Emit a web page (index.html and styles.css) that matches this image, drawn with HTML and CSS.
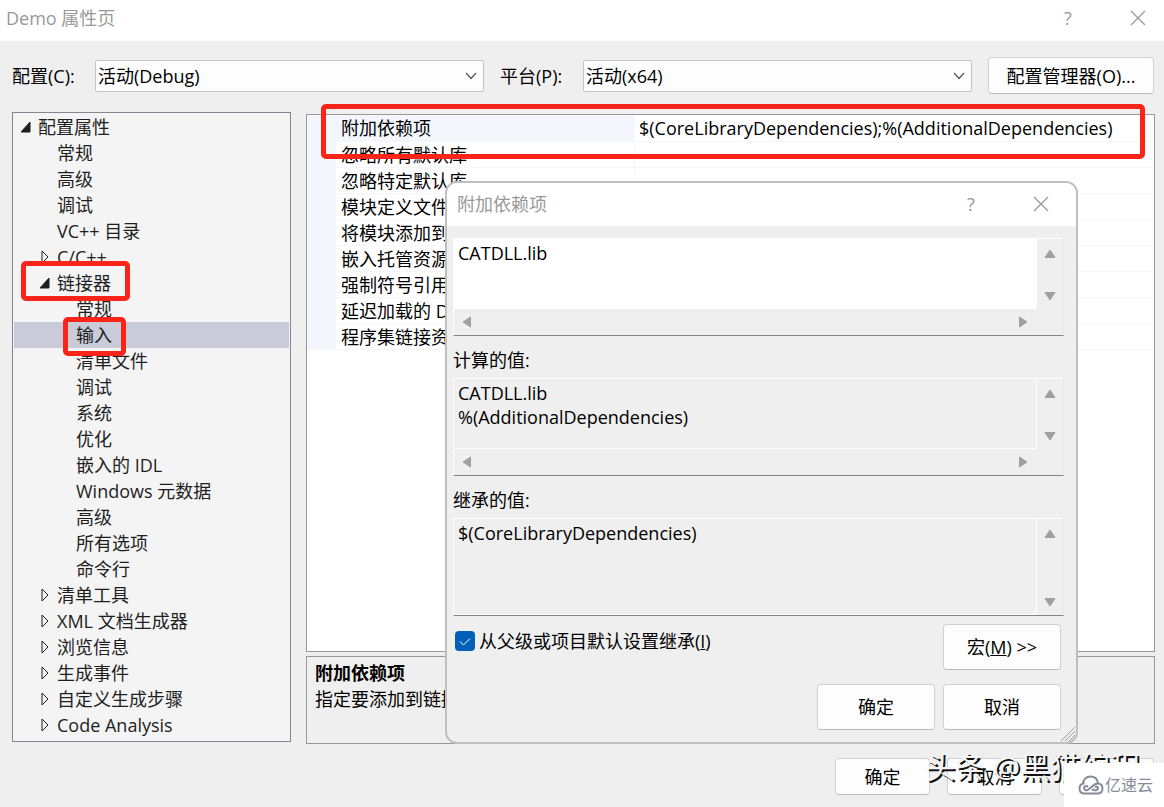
FILE: index.html
```html
<!DOCTYPE html>
<html lang="zh-CN">
<head>
    <meta charset="UTF-8">
    <meta name="viewport" content="width=device-width, initial-scale=1.0">
    <title>Demo 属性页</title>
    <link rel="stylesheet" href="styles.css">
</head>
<body>
    <header class="titlebar">
        <h1>Demo 属性页</h1>
        <button class="caption-btn" aria-label="帮助">?</button>
        <button class="caption-btn" aria-label="关闭">
            <svg width="16" height="16" viewBox="0 0 16 16"><path d="M1 1L15 15M15 1L1 15"/></svg>
        </button>
    </header>

    <div class="toolbar">
        <label for="config">配置(C):</label>
        <div class="select-wrap">
            <select id="config"><option>活动(Debug)</option></select>
            <svg class="chevron" width="12" height="8" viewBox="0 0 12 8"><path d="M1 1L6 6.5L11 1"/></svg>
        </div>
        <label for="platform">平台(P):</label>
        <div class="select-wrap">
            <select id="platform"><option>活动(x64)</option></select>
            <svg class="chevron" width="12" height="8" viewBox="0 0 12 8"><path d="M1 1L6 6.5L11 1"/></svg>
        </div>
        <button class="btn">配置管理器(O)...</button>
    </div>

    <main class="content">
        <nav class="tree">
            <ul>
                <li><button class="node open"><svg class="arrow" viewBox="0 0 10 14"><path d="M9 2V12H0Z"/></svg>配置属性</button>
                    <ul>
                        <li><button class="node">常规</button></li>
                        <li><button class="node">高级</button></li>
                        <li><button class="node">调试</button></li>
                        <li><button class="node">VC++ 目录</button></li>
                        <li><button class="node"><svg class="arrow" viewBox="0 0 10 14"><path d="M2 1L8 7L2 13Z"/></svg>C/C++</button></li>
                        <li><button class="node open"><svg class="arrow" viewBox="0 0 10 14"><path d="M9 2V12H0Z"/></svg>链接器</button>
                            <span class="mark mark-linker"></span>
                            <ul>
                                <li><button class="node">常规</button></li>
                                <li><button class="node selected">输入</button><span class="mark mark-input"></span></li>
                                <li><button class="node">清单文件</button></li>
                                <li><button class="node">调试</button></li>
                                <li><button class="node">系统</button></li>
                                <li><button class="node">优化</button></li>
                                <li><button class="node">嵌入的 IDL</button></li>
                                <li><button class="node">Windows 元数据</button></li>
                                <li><button class="node">高级</button></li>
                                <li><button class="node">所有选项</button></li>
                                <li><button class="node">命令行</button></li>
                            </ul>
                        </li>
                        <li><button class="node"><svg class="arrow" viewBox="0 0 10 14"><path d="M2 1L8 7L2 13Z"/></svg>清单工具</button></li>
                        <li><button class="node"><svg class="arrow" viewBox="0 0 10 14"><path d="M2 1L8 7L2 13Z"/></svg>XML 文档生成器</button></li>
                        <li><button class="node"><svg class="arrow" viewBox="0 0 10 14"><path d="M2 1L8 7L2 13Z"/></svg>浏览信息</button></li>
                        <li><button class="node"><svg class="arrow" viewBox="0 0 10 14"><path d="M2 1L8 7L2 13Z"/></svg>生成事件</button></li>
                        <li><button class="node"><svg class="arrow" viewBox="0 0 10 14"><path d="M2 1L8 7L2 13Z"/></svg>自定义生成步骤</button></li>
                        <li><button class="node"><svg class="arrow" viewBox="0 0 10 14"><path d="M2 1L8 7L2 13Z"/></svg>Code Analysis</button></li>
                    </ul>
                </li>
            </ul>
        </nav>

        <div class="detail">
            <section class="grid-panel">
                <table class="props">
                    <tr class="current"><th>附加依赖项</th><td>$(CoreLibraryDependencies);%(AdditionalDependencies)</td></tr>
                    <tr><th>忽略所有默认库</th><td></td></tr>
                    <tr><th>忽略特定默认库</th><td></td></tr>
                    <tr><th>模块定义文件</th><td></td></tr>
                    <tr><th>将模块添加到</th><td></td></tr>
                    <tr><th>嵌入托管资源</th><td></td></tr>
                    <tr><th>强制符号引用</th><td></td></tr>
                    <tr><th>延迟加载的 D</th><td></td></tr>
                    <tr><th>程序集链接资</th><td></td></tr>
                </table>
                <span class="mark mark-deps"></span>
            </section>
            <section class="help-panel">
                <h2>附加依赖项</h2>
                <p>指定要添加到链接</p>
            </section>
        </div>
    </main>

    <footer class="footer">
        <button class="btn">确定</button>
        <button class="btn">取消</button>
        <button class="btn" aria-label="应用"></button>
    </footer>

    <div class="dialog" role="dialog" aria-labelledby="dialog-title">
        <div class="dialog-title">
            <h2 id="dialog-title">附加依赖项</h2>
            <button class="caption-btn" aria-label="帮助">?</button>
            <button class="caption-btn" aria-label="关闭">
                <svg width="16" height="16" viewBox="0 0 16 16"><path d="M1 1L15 15M15 1L1 15"/></svg>
            </button>
        </div>
        <div class="dialog-body">
            <div class="field editable">
                <textarea aria-label="附加依赖项" wrap="off">CATDLL.lib</textarea>
                <div class="vbar">
                    <svg viewBox="0 0 12 10"><path d="M6 1L11 8.5H1Z"/></svg>
                    <svg viewBox="0 0 12 10"><path d="M6 9L11 1.5H1Z"/></svg>
                </div>
                <div class="hbar">
                    <svg viewBox="0 0 12 12"><path d="M2 6L9.500 1V11Z"/></svg>
                    <svg viewBox="0 0 12 12"><path d="M10 6L2.500 1V11Z"/></svg>
                </div>
            </div>
            <label class="field-label" for="computed">计算的值:</label>
            <div class="field">
                <textarea id="computed" wrap="off" readonly>CATDLL.lib
%(AdditionalDependencies)</textarea>
                <div class="vbar">
                    <svg viewBox="0 0 12 10"><path d="M6 1L11 8.5H1Z"/></svg>
                    <svg viewBox="0 0 12 10"><path d="M6 9L11 1.5H1Z"/></svg>
                </div>
                <div class="hbar">
                    <svg viewBox="0 0 12 12"><path d="M2 6L9.500 1V11Z"/></svg>
                    <svg viewBox="0 0 12 12"><path d="M10 6L2.500 1V11Z"/></svg>
                </div>
            </div>
            <label class="field-label" for="inherited">继承的值:</label>
            <div class="field">
                <textarea id="inherited" class="tall" readonly>$(CoreLibraryDependencies)</textarea>
                <div class="vbar tall">
                    <svg viewBox="0 0 12 10"><path d="M6 1L11 8.5H1Z"/></svg>
                    <svg viewBox="0 0 12 10"><path d="M6 9L11 1.5H1Z"/></svg>
                </div>
            </div>
            <div class="options">
                <div class="check">
                    <input type="checkbox" id="inherit" checked>
                    <svg class="tick" width="20" height="20" viewBox="0 0 20 20"><path d="M5 10.500L8.500 14L15 7.500"/></svg>
                    <label for="inherit">从父级或项目默认设置继承(<u>I</u>)</label>
                </div>
                <button class="btn">宏(<u>M</u>) &gt;&gt;</button>
            </div>
            <div class="actions">
                <button class="btn">确定</button>
                <button class="btn">取消</button>
            </div>
        </div>
        <svg class="grip" width="16" height="16" viewBox="0 0 16 16"><path d="M1 15L15 1M5 15L15 5M9 15L15 9"/></svg>
    </div>

    <div class="watermark">头条 @黑猫编程</div>
    <div class="logo">
        <svg width="26" height="20" viewBox="0 0 26 20">
            <path d="M6.500 8.500C3.500 8.500 1.500 10.500 1.500 13.500C1.500 16.500 3.500 18.500 6.500 18.500H19.500C22.500 18.500 24.500 16.500 24.500 13.500C24.500 10.500 22.500 8.500 19.500 8.500C17 8.500 15.500 10 14 11.500L10.500 14.500C8.500 16 6 15 6 13C6 11 8.500 10.500 10 12"/>
            <path d="M5 9C5 4.500 8.500 1.500 12.500 1.500C16.500 1.500 19.500 4 20 8.500M14 14C16 16 20 15.500 20 13C20 11.500 18 11 17 12.500"/>
        </svg>
        <span>亿速云</span>
    </div>
</body>
</html>
```
FILE: styles.css
```css
* {
    margin: 0;
    padding: 0;
    box-sizing: border-box;
}

body {
    background-color: #efefef;
    color: #000;
    font-family: 'Open Sans', 'Noto Sans CJK SC', sans-serif;
    font-size: 18px;
    line-height: 26px;
    min-height: 100vh;
    display: flex;
    flex-direction: column;
    position: relative;
    overflow: hidden;
}

button, select, textarea {
    font: inherit;
    color: inherit;
}

h1, h2 {
    font-size: 18px;
    font-weight: normal;
}

.titlebar {
    display: flex;
    align-items: center;
    height: 41px;
    padding: 0 16px 5px 6px;
    background-color: #fff;
    color: #999;
}

.titlebar h1,
.dialog-title h2 {
    flex: 1;
}

.caption-btn {
    display: flex;
    align-items: center;
    justify-content: center;
    width: 20px;
    height: 26px;
    margin-left: 50px;
    border: none;
    background: none;
    color: #999;
}

.caption-btn path {
    fill: none;
    stroke: #999;
    stroke-width: 1.3;
}

.toolbar {
    display: grid;
    grid-template-columns: 67px 1fr 67px 1fr 166px;
    column-gap: 16px;
    align-items: center;
    padding: 16px 10px 0 12px;
}

.toolbar label {
    white-space: nowrap;
}

.select-wrap {
    position: relative;
}

.select-wrap select {
    display: block;
    width: 100%;
    height: 32px;
    padding: 0 2px;
    appearance: none;
    background-color: #fdfdfd;
    border: 1px solid #c4c4c4;
    border-radius: 2px;
}

.chevron {
    position: absolute;
    right: 7px;
    top: 12px;
    fill: none;
    stroke: #555;
    stroke-width: 1.2;
}

.btn {
    height: 37px;
    background-color: #fdfdfd;
    border: 1px solid #d0d0d0;
    border-bottom-color: #bbb;
    border-radius: 4px;
}

.content {
    display: flex;
    align-items: flex-start;
    gap: 15px;
    padding: 18px 9px 0 12px;
}

.tree {
    width: 279px;
    padding: 1px 1px 3px;
    border: 1px solid #828790;
    background-color: #f4f4f4;
    color: #1e1e1e;
}

.tree ul {
    list-style: none;
}

.tree li {
    position: relative;
}

.node {
    position: relative;
    display: block;
    width: 100%;
    height: 26px;
    padding-left: 24px;
    border: none;
    background: none;
    text-align: left;
}

.tree ul ul .node {
    padding-left: 43px;
}

.tree ul ul ul .node {
    padding-left: 62px;
}

.node.selected {
    background-color: #cacbd9;
}

.arrow {
    position: absolute;
    left: 7px;
    top: 6px;
    width: 10px;
    height: 14px;
    fill: #f4f4f4;
    stroke: #1e1e1e;
    stroke-width: 1;
}

.tree ul ul .arrow {
    left: 26px;
}

.node.open .arrow {
    fill: #1e1e1e;
}

.mark {
    position: absolute;
    z-index: 1;
    border: 5px solid #fa2419;
    border-radius: 5px;
    pointer-events: none;
}

.mark-linker {
    left: 7px;
    top: -9px;
    width: 109px;
    height: 40px;
}

.mark-input {
    left: 49px;
    top: -5px;
    width: 63px;
    height: 39px;
}

.mark-deps {
    left: 14px;
    right: 9px;
    top: -11px;
    height: 55px;
}

.detail {
    flex: 1;
    align-self: stretch;
    display: flex;
    flex-direction: column;
    gap: 4px;
    padding-top: 2px;
    margin-bottom: -2px;
}

.grid-panel {
    position: relative;
    flex: 1;
    background-color: #fff;
    border: 1px solid #999;
}

.props {
    width: 100%;
    table-layout: fixed;
    border-collapse: collapse;
}

.props th,
.props td {
    height: 26px;
    padding-top: 1px;
    line-height: 24px;
    border-bottom: 1px solid #f5f6f9;
    font-weight: normal;
    text-align: left;
    white-space: nowrap;
}

.props th {
    width: 313px;
    padding-left: 5px;
    border-left: 29px solid #f3f6fd;
    border-right: 1px solid #f3f6fb;
}

.props .current th {
    background-color: #f3f6fd;
}

.props td {
    padding-left: 4px;
}

.help-panel {
    height: 88px;
    padding: 3px 8px;
    border: 1px solid #999;
}

.help-panel h2 {
    font-weight: bold;
}

.footer {
    display: flex;
    justify-content: flex-end;
    gap: 17px;
    padding: 16px 10px 0;
}

.footer .btn {
    width: 95px;
}

.dialog {
    position: absolute;
    left: 445px;
    top: 181px;
    width: 633px;
    z-index: 2;
    background-color: #efefef;
    border: 2px solid #bfbfbf;
    border-radius: 12px;
    overflow: hidden;
}

.dialog-title {
    display: flex;
    align-items: center;
    height: 43px;
    padding: 0 25px 2px 10px;
    background-color: #fff;
    color: #999;
}

.dialog-body {
    padding: 12px 12px 12px 6px;
}

.field {
    display: grid;
    grid-template-columns: 1fr 26px;
    height: 98px;
    border: 1px solid #e8e8e8;
    border-top-color: #fff;
    border-left-color: #fff;
    border-bottom-color: #858585;
}

.field textarea {
    display: block;
    width: 100%;
    height: 70px;
    padding: 2px 4px;
    border: none;
    border-right: 1px solid #fff;
    border-bottom: 1px solid #fff;
    background: none;
    resize: none;
    overflow: hidden;
    line-height: 24px;
}

.editable textarea {
    background-color: #fff;
}

.field textarea.tall,
.vbar.tall {
    height: 96px;
}

.vbar {
    display: flex;
    flex-direction: column;
    justify-content: space-between;
    align-items: center;
    height: 70px;
    padding: 10px 0 8px;
}

.vbar svg {
    width: 12px;
    height: 10px;
}

.hbar {
    display: flex;
    justify-content: space-between;
    align-items: center;
    padding: 0 8px 0 7px;
    height: 26px;
}

.hbar svg {
    width: 12px;
    height: 12px;
}

.vbar path,
.hbar path {
    fill: #a0a0a0;
    stroke: #a0a0a0;
    stroke-linejoin: round;
}

.field-label {
    display: block;
    height: 42px;
    padding-top: 11px;
}

.options {
    display: flex;
    justify-content: space-between;
    align-items: flex-start;
    padding: 8px 3px 0 2px;
}

.check {
    position: relative;
    display: flex;
    align-items: center;
    gap: 4px;
    height: 34px;
}

.check input {
    width: 20px;
    height: 20px;
    appearance: none;
    background-color: #005fb8;
    border-radius: 4px;
}

.tick {
    position: absolute;
    left: 0;
    top: 7px;
    fill: none;
    stroke: #fff;
    pointer-events: none;
}

.dialog .btn {
    width: 118px;
    height: 46px;
}

.actions {
    display: flex;
    justify-content: flex-end;
    gap: 8px;
    padding: 14px 3px 0 0;
}

.grip {
    position: absolute;
    right: 0;
    bottom: 0;
    stroke: #999;
}

.watermark {
    position: absolute;
    right: 24px;
    bottom: 22px;
    z-index: 3;
    color: #f4f4f4;
    font-size: 30px;
    line-height: 36px;
    text-shadow: 2px 2px 0 #111;
    white-space: nowrap;
}

.logo {
    position: absolute;
    right: 0;
    bottom: 0;
    z-index: 4;
    display: flex;
    align-items: center;
    justify-content: center;
    gap: 1px;
    width: 100px;
    height: 44px;
    padding-left: 3px;
    background-color: #fff;
    color: #858b98;
    font-size: 16px;
}

.logo path {
    fill: none;
    stroke: #858b98;
    stroke-width: 2;
}
```
